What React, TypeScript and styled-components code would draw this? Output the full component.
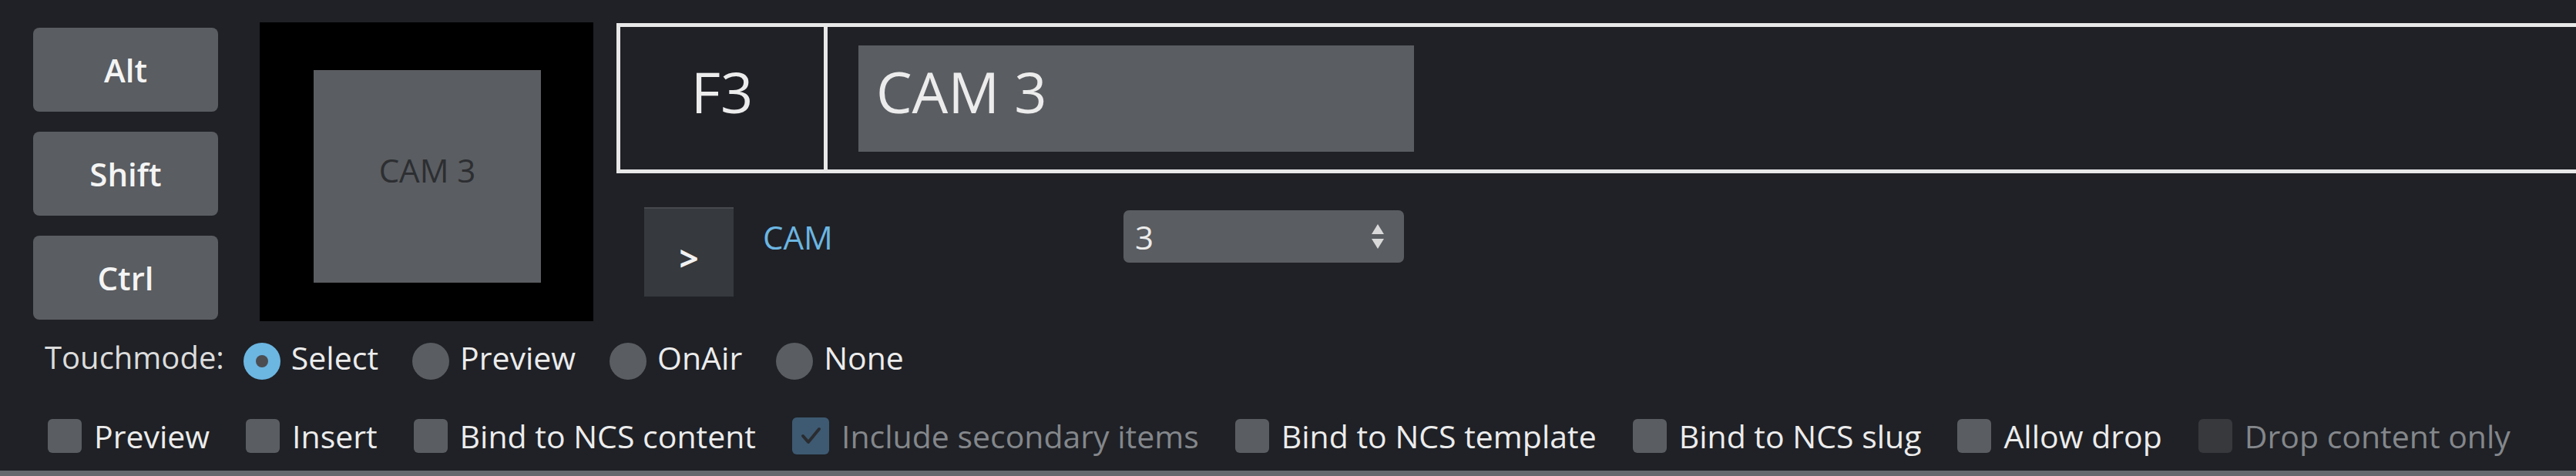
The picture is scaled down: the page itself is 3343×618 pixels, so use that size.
import { createGlobalStyle, styled } from "styled-components";

const GlobalStyle = createGlobalStyle`
  *{
    padding: 0;
    margin: 0;
    box-sizing: border-box;
  }
  body {
    background: #1f2126;
    font-family: "Open Sans", "Noto Sans", sans-serif;
    overflow: hidden;
  }
`;

const color = {
  background: "#1f2126",
  control: "#5a5d61",
  controlDark: "#36393d",
  text: "#ececec",
  muted: "#84878b",
  accent: "#6cb6e2",
  border: "#e8e8e8",
};

const Page = styled.div`
  width: 3343px;
  height: 618px;
  display: flex;
  flex-direction: column;
  background: ${color.background};
  overflow: hidden;
`;

const TopSection = styled.div`
  display: flex;
  align-items: flex-start;
  padding: 29px 0 0 43px;
`;

const KeyColumn = styled.div`
  display: flex;
  flex-direction: column;
  gap: 26px;
  margin-top: 7px;
`;

const KeyButton = styled.div`
  width: 240px;
  height: 109px;
  border-radius: 8px;
  background: ${color.control};
  color: #f4f4f4;
  font-size: 42px;
  font-weight: 600;
  display: flex;
  align-items: center;
  justify-content: center;
`;

const Preview = styled.div`
  width: 433px;
  height: 388px;
  margin-left: 54px;
  background: #000;
  padding: 62px 68px 50px 70px;
`;

const PreviewTile = styled.div`
  width: 100%;
  height: 100%;
  background: ${color.control};
  color: #2c2e31;
  font-size: 42px;
  display: flex;
  align-items: center;
  justify-content: center;
  padding-bottom: 18px;
`;

const RightPane = styled.div`
  flex: 1;
  min-width: 0;
  margin-left: 30px;
  margin-top: 1px;
  display: flex;
  flex-direction: column;
`;

const HeaderBox = styled.div`
  height: 195px;
  display: flex;
  border: 5px solid ${color.border};
  border-right: none;
`;

const KeyCell = styled.div`
  width: 269px;
  border-right: 5px solid ${color.border};
  color: ${color.text};
  font-size: 74px;
  display: flex;
  align-items: center;
  justify-content: center;
  padding-bottom: 18px;
`;

const NameArea = styled.div`
  flex: 1;
  display: flex;
  align-items: center;
  padding-left: 40px;
`;

const NameField = styled.div`
  width: 721px;
  height: 138px;
  background: ${color.control};
  color: ${color.text};
  font-size: 74px;
  display: flex;
  align-items: center;
  padding: 0 0 18px 23px;
`;

const ParamRow = styled.div`
  display: flex;
  align-items: flex-start;
  margin-top: 44px;
  padding-left: 36px;
`;

const StepButton = styled.div`
  width: 116px;
  height: 116px;
  background: ${color.controlDark};
  border-top: 2px solid #46494d;
  color: #f2f2f2;
  font-size: 44px;
  font-weight: 700;
  display: flex;
  align-items: center;
  justify-content: center;
  padding-top: 14px;
`;

const ParamField = styled.div`
  display: flex;
  align-items: center;
  margin: 4px 0 0 38px;
`;

const ParamLabel = styled.div`
  width: 468px;
  color: ${color.accent};
  font-size: 42px;
`;

const Spinner = styled.div`
  width: 364px;
  height: 68px;
  border-radius: 7px;
  background: ${color.control};
  color: ${color.text};
  font-size: 42px;
  display: flex;
  align-items: center;
  justify-content: space-between;
  padding: 0 24px 0 15px;
`;

const TouchRow = styled.div`
  display: flex;
  align-items: center;
  margin-top: 23px;
  padding-left: 58px;
  height: 58px;
`;

const TouchLabel = styled.span`
  color: #dcdcdc;
  font-size: 40px;
  line-height: 48px;
  padding-bottom: 10px;
  margin-right: 25px;
`;

const RadioGroup = styled.div`
  display: flex;
  align-items: center;
  gap: 44px;
`;

const RadioOption = styled.label`
  display: flex;
  align-items: center;
  gap: 14px;
  color: ${color.text};
  font-size: 41px;
  line-height: 48px;

  & > span {
    padding-bottom: 10px;
  }
`;

const RadioDot = styled.div<{ $checked?: boolean }>`
  width: 48px;
  height: 48px;
  border-radius: 50%;
  background: ${(p) => (p.$checked ? color.accent : color.control)};
  display: flex;
  align-items: center;
  justify-content: center;

  &::after {
    content: "";
    width: 16px;
    height: 16px;
    border-radius: 50%;
    background: #4b4d51;
    display: ${(p) => (p.$checked ? "block" : "none")};
  }
`;

const CheckRow = styled.div`
  display: flex;
  align-items: center;
  gap: 47px;
  margin-top: 44px;
  padding-left: 62px;
`;

const CheckOption = styled.label<{ $disabled?: boolean }>`
  display: flex;
  align-items: center;
  gap: 16px;
  color: ${(p) => (p.$disabled ? color.muted : color.text)};
  font-size: 41px;
  line-height: 48px;
  white-space: nowrap;
`;

const CheckBox = styled.div<{ $state: "off" | "checked" | "disabled" }>`
  width: ${(p) => (p.$state === "checked" ? 48 : 44)}px;
  height: ${(p) => (p.$state === "checked" ? 48 : 44)}px;
  border-radius: 6px;
  background: ${(p) =>
    p.$state === "checked"
      ? "#3e5a72"
      : p.$state === "disabled"
      ? "#37393d"
      : color.control};
  display: flex;
  align-items: center;
  justify-content: center;
`;

const BottomBar = styled.div`
  margin-top: auto;
  height: 7px;
  background: #66696d;
`;

const SpinArrows = () => (
  <svg width="20" height="36" viewBox="0 0 20 36">
    <polygon points="2,15 10,2 18,15" fill="#d9d9d9" />
    <polygon points="2,21 10,34 18,21" fill="#d9d9d9" />
  </svg>
);

const CheckMark = () => (
  <svg width="32" height="32" viewBox="0 0 32 32">
    <polyline
      points="6,16 13,24 27,7"
      fill="none"
      stroke="#2a2c30"
      strokeWidth="4"
      strokeLinecap="round"
      strokeLinejoin="round"
    />
  </svg>
);

const touchModes = ["Select", "Preview", "OnAir", "None"];

const options: { label: string; state: "off" | "checked" | "disabled" }[] = [
  { label: "Preview", state: "off" },
  { label: "Insert", state: "off" },
  { label: "Bind to NCS content", state: "off" },
  { label: "Include secondary items", state: "checked" },
  { label: "Bind to NCS template", state: "off" },
  { label: "Bind to NCS slug", state: "off" },
  { label: "Allow drop", state: "off" },
  { label: "Drop content only", state: "disabled" },
];

function App() {
  return (
    <>
      <GlobalStyle />
      <Page>
        <TopSection>
          <KeyColumn>
            <KeyButton>Alt</KeyButton>
            <KeyButton>Shift</KeyButton>
            <KeyButton>Ctrl</KeyButton>
          </KeyColumn>
          <Preview>
            <PreviewTile>CAM 3</PreviewTile>
          </Preview>
          <RightPane>
            <HeaderBox>
              <KeyCell>F3</KeyCell>
              <NameArea>
                <NameField>CAM 3</NameField>
              </NameArea>
            </HeaderBox>
            <ParamRow>
              <StepButton>&gt;</StepButton>
              <ParamField>
                <ParamLabel>CAM</ParamLabel>
                <Spinner>
                  <span>3</span>
                  <SpinArrows />
                </Spinner>
              </ParamField>
            </ParamRow>
          </RightPane>
        </TopSection>

        <TouchRow>
          <TouchLabel>Touchmode:</TouchLabel>
          <RadioGroup>
            {touchModes.map((mode) => (
              <RadioOption key={mode}>
                <RadioDot $checked={mode === "Select"} />
                <span>{mode}</span>
              </RadioOption>
            ))}
          </RadioGroup>
        </TouchRow>

        <CheckRow>
          {options.map((opt) => (
            <CheckOption key={opt.label} $disabled={opt.state !== "off"}>
              <CheckBox $state={opt.state}>
                {opt.state === "checked" && <CheckMark />}
              </CheckBox>
              <span>{opt.label}</span>
            </CheckOption>
          ))}
        </CheckRow>

        <BottomBar />
      </Page>
    </>
  );
}

export default App;
